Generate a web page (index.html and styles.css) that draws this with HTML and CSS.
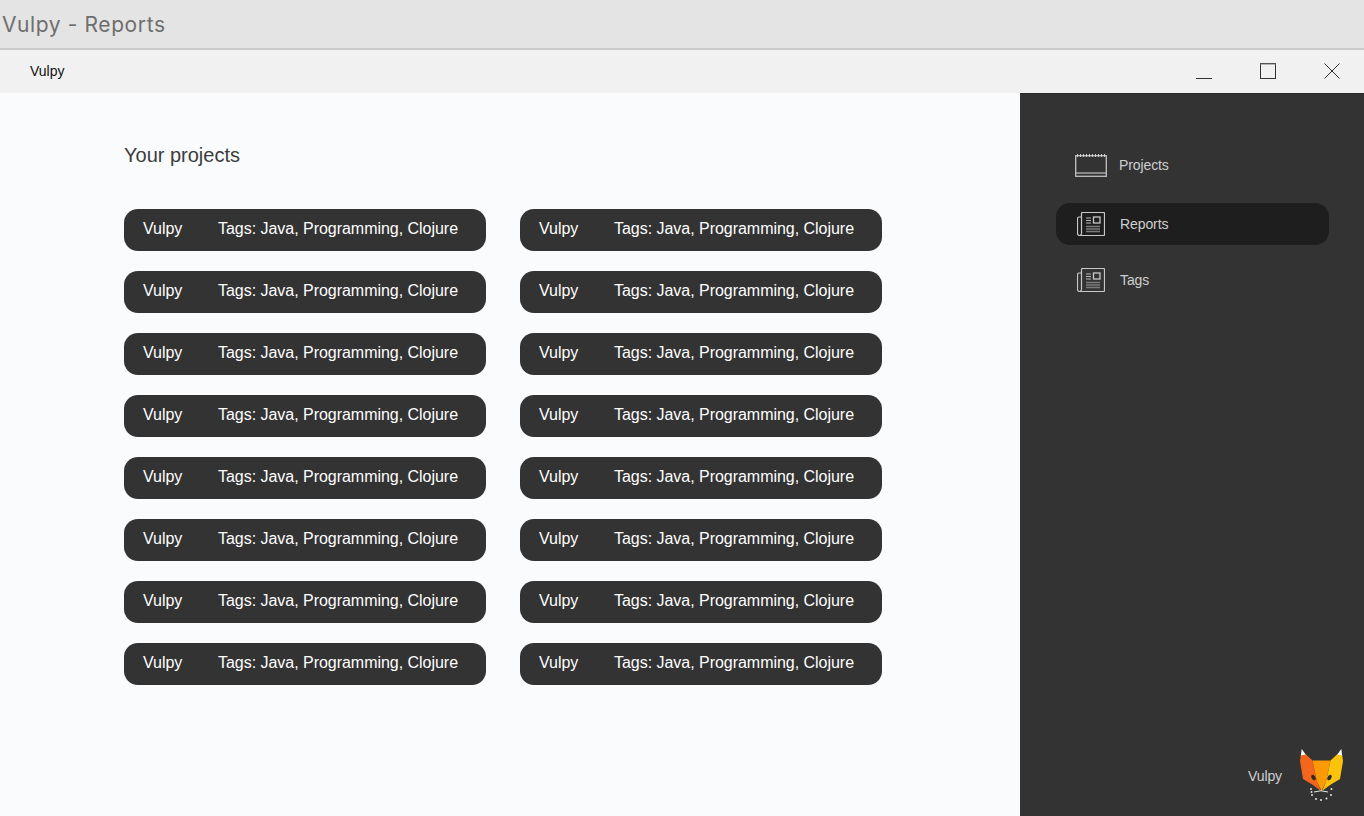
FILE: index.html
```html
<!DOCTYPE html>
<html lang="en">
<head>
<meta charset="utf-8">
<title>Vulpy - Reports</title>
<link rel="stylesheet" href="styles.css">
</head>
<body>
<svg class="defs" width="0" height="0" aria-hidden="true">
  <symbol id="news" viewBox="0 0 28 24">
    <path d="M4.500 21.500V1.500a1 1 0 0 1 1-1h21a1 1 0 0 1 1 1v21a1 1 0 0 1-1 1H2.500a2 2 0 0 1-2-2V6.500a1.500 1.500 0 0 1 1.500-1.500h2.500M4.500 21.500a2 2 0 0 1-2 2" fill="none" stroke="#c8c8c8" stroke-width="1.200"/>
    <path d="M9 6h5M9 8.500h5M9 11h5" stroke="#b8b8b8" stroke-width="1" fill="none"/>
    <rect x="16.500" y="5" width="6.500" height="6" fill="none" stroke="#c8c8c8" stroke-width="1.300"/>
    <path d="M9 14.500h14M9 17h14M9 19.500h14" stroke="#7c7c7c" stroke-width="1.500" fill="none"/>
  </symbol>
</svg>
<header class="titlebar">Vulpy - Reports</header>
<div class="menubar">
  <span class="app-name">Vulpy</span>
  <div class="win-controls">
    <svg class="win-btn" viewBox="0 0 16 16"><path d="M0 15.500h16" stroke="#333" stroke-width="1"/></svg>
    <svg class="win-btn" viewBox="0 0 16 16"><rect x=".5" y=".5" width="15" height="15" fill="none" stroke="#333"/><path d="M0 1h16" stroke="#777" stroke-width="1"/></svg>
    <svg class="win-btn" viewBox="0 0 16 16"><path d="M.5.500l15 15M15.500.500l-15 15" stroke="#333" fill="none"/></svg>
  </div>
</div>
<div class="body">
  <main class="content">
    <h1 class="heading">Your projects</h1>
    <div class="grid">
      <div class="project"><span class="p-name">Vulpy</span><span>Tags: Java, Programming, Clojure</span></div>
      <div class="project"><span class="p-name">Vulpy</span><span>Tags: Java, Programming, Clojure</span></div>
      <div class="project"><span class="p-name">Vulpy</span><span>Tags: Java, Programming, Clojure</span></div>
      <div class="project"><span class="p-name">Vulpy</span><span>Tags: Java, Programming, Clojure</span></div>
      <div class="project"><span class="p-name">Vulpy</span><span>Tags: Java, Programming, Clojure</span></div>
      <div class="project"><span class="p-name">Vulpy</span><span>Tags: Java, Programming, Clojure</span></div>
      <div class="project"><span class="p-name">Vulpy</span><span>Tags: Java, Programming, Clojure</span></div>
      <div class="project"><span class="p-name">Vulpy</span><span>Tags: Java, Programming, Clojure</span></div>
      <div class="project"><span class="p-name">Vulpy</span><span>Tags: Java, Programming, Clojure</span></div>
      <div class="project"><span class="p-name">Vulpy</span><span>Tags: Java, Programming, Clojure</span></div>
      <div class="project"><span class="p-name">Vulpy</span><span>Tags: Java, Programming, Clojure</span></div>
      <div class="project"><span class="p-name">Vulpy</span><span>Tags: Java, Programming, Clojure</span></div>
      <div class="project"><span class="p-name">Vulpy</span><span>Tags: Java, Programming, Clojure</span></div>
      <div class="project"><span class="p-name">Vulpy</span><span>Tags: Java, Programming, Clojure</span></div>
      <div class="project"><span class="p-name">Vulpy</span><span>Tags: Java, Programming, Clojure</span></div>
      <div class="project"><span class="p-name">Vulpy</span><span>Tags: Java, Programming, Clojure</span></div>
    </div>
  </main>
  <aside class="sidebar">
    <nav class="nav">
      <a class="nav-item nav-projects">
        <svg class="ico-cal" viewBox="0 0 32 23">
          <rect x=".7" y="1.700" width="30.600" height="20.600" fill="none" stroke="#c2c2c2" stroke-width="1.300"/>
          <path d="M1 19h30" stroke="#c2c2c2" stroke-width="1.200" fill="none"/>
          <path d="M2 1.500h28" stroke="#cfcfcf" stroke-width="3" stroke-dasharray="1 2" fill="none"/>
        </svg>
        <span>Projects</span>
      </a>
      <a class="nav-item active"><svg class="ico-news"><use href="#news"/></svg><span>Reports</span></a>
      <a class="nav-item nav-tags"><svg class="ico-news"><use href="#news"/></svg><span>Tags</span></a>
    </nav>
    <div class="brand">
      <span>Vulpy</span>
      <svg class="fox" viewBox="0 0 44 54">
        <path d="M1.700 0L.8 7 6 6z" fill="#fff"/>
        <path d="M41.300 0L42.200 7 37 6z" fill="#fff"/>
        <path d="M.8 6.500L6 5.500 12.500 11.500 17 33 21 42 13 36 3 30 0 12z" fill="#f4661b"/>
        <path d="M12.500 11.500H30.500L26 33 21.500 42 17 33z" fill="#fb9a05"/>
        <path d="M42.200 6.500L37 5.500 30.500 11.500 26 33 22 42 30 36 40 30 43 12z" fill="#fdc20c"/>
        <ellipse cx="13.500" cy="28.500" rx="1.800" ry="3" transform="rotate(-30 13.500 28.500)" fill="#2f2a26"/>
        <ellipse cx="29.500" cy="28.500" rx="1.800" ry="3" transform="rotate(30 29.500 28.500)" fill="#2f2a26"/>
        <path d="M14 43q7-2.500 14 0" stroke="#e8e8e8" stroke-width="1" fill="none"/>
        <g fill="#e4e4e4">
          <circle cx="11" cy="40" r="1"/><circle cx="11.500" cy="43" r="1"/><circle cx="12" cy="46" r="1"/>
          <circle cx="16" cy="50" r="1"/><circle cx="21" cy="51" r="1"/><circle cx="26.500" cy="49.500" r="1"/>
          <circle cx="31" cy="46" r="1"/><circle cx="31.500" cy="40" r="1"/>
        </g>
      </svg>
    </div>
  </aside>
</div>
</body>
</html>
```
FILE: styles.css
```css
* { box-sizing: border-box; }
html, body { margin: 0; height: 100%; overflow: hidden; }
body {
  display: flex;
  flex-direction: column;
  height: 816px;
  font-family: "Liberation Sans", Arial, sans-serif;
  background: #fafbfd;
}
.defs { display: block; height: 0; }
.titlebar {
  height: 50px;
  flex: none;
  background: #e4e4e4;
  border-bottom: 2px solid #cacaca;
  padding-left: 2px;
  font-family: Inter, sans-serif;
  font-size: 21px;
  line-height: 50px;
  letter-spacing: .6px;
  color: #6e6e6e;
}
.menubar {
  height: 43px;
  flex: none;
  display: flex;
  align-items: center;
  justify-content: space-between;
  background: #f1f1f1;
  padding-left: 30px;
}
.app-name { font-size: 14px; color: #111; padding-bottom: 2px; }
.win-controls {
  display: flex;
  gap: 48px;
  padding-right: 24px;
  height: 16px;
  margin-top: -1px;
}
.win-btn { width: 16px; height: 16px; display: block; }
.body { flex: 1; display: flex; min-height: 0; }
.content { flex: 1; padding: 50px 0 0 124px; }
.heading {
  margin: 0;
  font-size: 20px;
  font-weight: 400;
  line-height: 24px;
  color: #3c3c3c;
}
.grid {
  display: grid;
  grid-template-columns: 362px 362px;
  column-gap: 34px;
  row-gap: 20px;
  margin-top: 42px;
}
.project {
  height: 42px;
  display: flex;
  align-items: center;
  background: #333;
  border-radius: 14px;
  color: #fff;
  font-size: 16px;
  padding: 0 0 3px 19px;
  letter-spacing: -.03px;
}
.p-name { width: 75px; flex: none; }
.sidebar {
  width: 344px;
  flex: none;
  background: #333;
  border-top: 1px solid #2a2a2a;
  display: flex;
  flex-direction: column;
  justify-content: space-between;
  padding: 0 0 13px;
}
.nav { display: flex; flex-direction: column; padding: 50px 35px 0 36px; }
.nav-item {
  display: flex;
  align-items: center;
  color: #cfcfcf;
  font-size: 14px;
  height: 42px;
  border-radius: 14px;
  padding-left: 21px;
  letter-spacing: -.1px;
}
.nav-item span { margin-left: 15px; }
.nav-projects { padding-left: 19px; margin-bottom: 17px; }
.nav-projects span { margin-left: 12px; }
.nav-tags { margin-top: 14px; }
.active { background: #1e1e1e; }
.ico-cal { width: 32px; height: 23px; display: block; }
.ico-news { width: 28px; height: 24px; display: block; }
.brand {
  display: flex;
  align-items: center;
  justify-content: flex-end;
  gap: 18px;
  padding-right: 20px;
  color: #cfcfcf;
  font-size: 14px;
  letter-spacing: -.1px;
}
.fox { width: 44px; height: 54px; display: block; }
```
